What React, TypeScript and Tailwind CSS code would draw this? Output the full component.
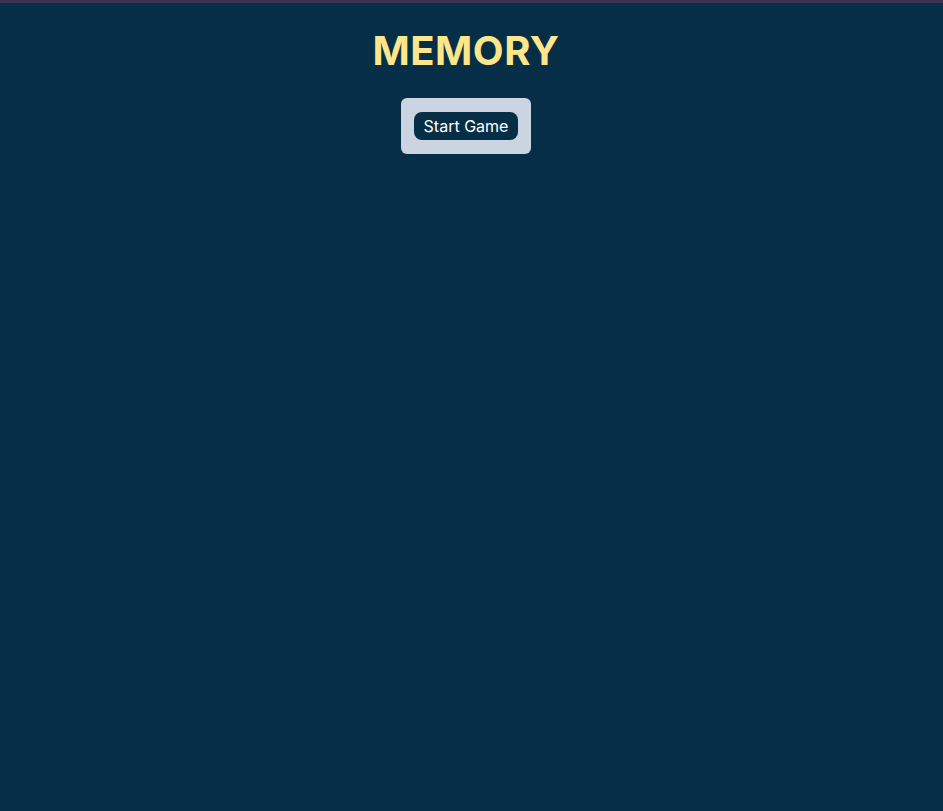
const App = () => {
  return (
    <div className="min-h-screen border-t-[3px] border-[#3d3350] bg-[#072e47] pr-[11px] font-['Inter',sans-serif]">
      <div className="flex flex-col items-center pt-6">
        <h1 className="text-[40px] leading-[48px] font-bold tracking-[0.5px] text-[#fde68a]">MEMORY</h1>

        <div className="mt-[23px] rounded-md bg-[#cbd5e1] px-[13px] py-[14px]">
          <button className="rounded-lg bg-[#072e47] px-2.5 py-0.5 text-base leading-6 text-white">
            Start Game
          </button>
        </div>
      </div>
    </div>
  );
};

export default App;
